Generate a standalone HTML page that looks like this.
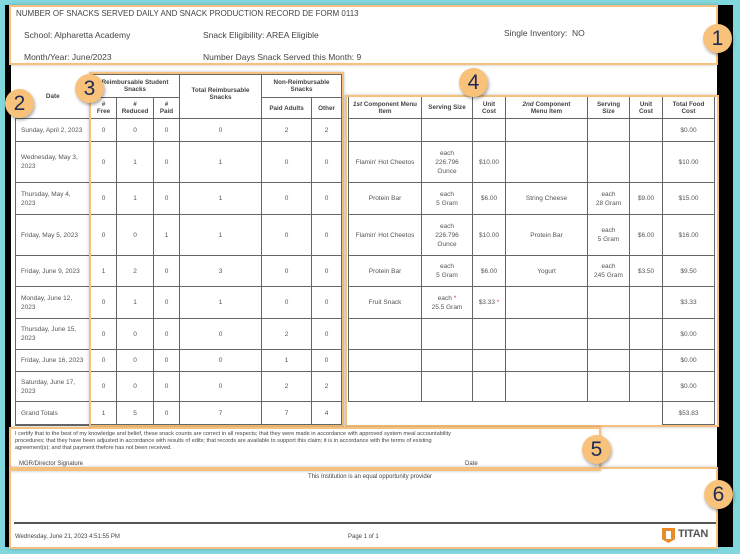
<!DOCTYPE html>
<html><head><style>
body{margin:0;width:740px;height:554px;background:#80d7dc;position:relative;overflow:hidden;font-family:"Liberation Sans",sans-serif;color:#444}
.page{position:absolute;left:5px;top:5px;width:728px;height:542px;background:#000}
.white{position:absolute;left:11px;top:5px;width:706px;height:542px;background:#fff}
.a{position:absolute}
.ob{position:absolute;border:2px solid #f6c07e;box-shadow:0 0 3px rgba(0,0,0,.25)}
.c{position:absolute;width:29px;height:29px;border-radius:50%;background:#f8c27a;color:#1d2a55;font-size:21px;text-align:center;line-height:30px;box-shadow:1px 2px 3px rgba(0,0,0,.35)}
table{position:absolute;border-collapse:collapse;table-layout:fixed;font-size:6.5px}
td{border:1px solid #666;text-align:center;padding:0;line-height:9px;color:#555}
th{border:1px solid #666;font-size:6.3px;font-weight:bold;padding:0 7px;line-height:7px;color:#444}
td.l{text-align:left;padding-left:5px}
.t{font-size:8.5px;color:#444}
</style></head><body>
<div class="page"></div><div class="white"></div>
<div class="a t" style="left:16px;top:9px;font-size:8px">NUMBER OF SNACKS SERVED DAILY AND SNACK PRODUCTION RECORD DE FORM 0113</div>
<div class="a t" style="left:24px;top:30px">School: Alpharetta Academy</div>
<div class="a t" style="left:203px;top:30px">Snack Eligibility: AREA Eligible</div>
<div class="a t" style="left:504px;top:28px">Single Inventory:&nbsp; NO</div>
<div class="a t" style="left:24px;top:52px">Month/Year: June/2023</div>
<div class="a t" style="left:203px;top:52px">Number Days Snack Served this Month: 9</div>

<table style="left:15px;top:74px;width:326px">
<colgroup><col style="width:75px"><col style="width:26px"><col style="width:37px"><col style="width:26px"><col style="width:82px"><col style="width:50px"><col style="width:30px"></colgroup>
<tr style="height:23px"><th rowspan="2" style="border-top:none;border-left:none">Date</th><th colspan="3">Reimbursable Student Snacks</th><th rowspan="2" style="vertical-align:top;padding-top:12px">Total Reimbursable Snacks</th><th colspan="2" style="padding:0 8px">Non-Reimbursable Snacks</th></tr>
<tr style="height:21px"><th style="padding:0">#<br>Free</th><th style="padding:0">#<br>Reduced</th><th style="padding:0">#<br>Paid</th><th style="padding:0">Paid Adults</th><th style="padding:0">Other</th></tr>
<tr style="height:23px"><td class="l">Sunday, April 2, 2023</td><td>0</td><td>0</td><td>0</td><td>0</td><td>2</td><td>2</td></tr>
<tr style="height:41px"><td class="l">Wednesday, May 3,<br>2023</td><td>0</td><td>1</td><td>0</td><td>1</td><td>0</td><td>0</td></tr>
<tr style="height:32px"><td class="l">Thursday, May 4,<br>2023</td><td>0</td><td>1</td><td>0</td><td>1</td><td>0</td><td>0</td></tr>
<tr style="height:41px"><td class="l">Friday, May 5, 2023</td><td>0</td><td>0</td><td>1</td><td>1</td><td>0</td><td>0</td></tr>
<tr style="height:31px"><td class="l">Friday, June 9, 2023</td><td>1</td><td>2</td><td>0</td><td>3</td><td>0</td><td>0</td></tr>
<tr style="height:32px"><td class="l">Monday, June 12,<br>2023</td><td>0</td><td>1</td><td>0</td><td>1</td><td>0</td><td>0</td></tr>
<tr style="height:31px"><td class="l">Thursday, June 15,<br>2023</td><td>0</td><td>0</td><td>0</td><td>0</td><td>2</td><td>0</td></tr>
<tr style="height:22px"><td class="l">Friday, June 16, 2023</td><td>0</td><td>0</td><td>0</td><td>0</td><td>1</td><td>0</td></tr>
<tr style="height:30px"><td class="l">Saturday, June 17,<br>2023</td><td>0</td><td>0</td><td>0</td><td>0</td><td>2</td><td>2</td></tr>
<tr style="height:23px"><td class="l">Grand Totals</td><td>1</td><td>5</td><td>0</td><td>7</td><td>7</td><td>4</td></tr>
</table>

<table style="left:348px;top:96px;width:366px">
<colgroup><col style="width:73px"><col style="width:51px"><col style="width:33px"><col style="width:82px"><col style="width:42px"><col style="width:33px"><col style="width:52px"></colgroup>
<tr style="height:22px"><th style="padding:0 3px"><i>1st</i> Component Menu Item</th><th style="padding:0">Serving Size</th><th style="padding:0 6px">Unit Cost</th><th style="padding:0 8px"><i>2nd</i> Component Menu Item</th><th style="padding:0 5px">Serving Size</th><th style="padding:0 6px">Unit Cost</th><th style="padding:0 8px">Total Food Cost</th></tr>
<tr style="height:23px"><td></td><td></td><td></td><td></td><td></td><td></td><td>$0.00</td></tr>
<tr style="height:41px"><td>Flamin' Hot Cheetos</td><td>each<br>226.796<br>Ounce</td><td>$10.00</td><td></td><td></td><td></td><td>$10.00</td></tr>
<tr style="height:32px"><td>Protein Bar</td><td>each<br>5 Gram</td><td>$6.00</td><td>String Cheese</td><td>each<br>28 Gram</td><td>$9.00</td><td>$15.00</td></tr>
<tr style="height:41px"><td>Flamin' Hot Cheetos</td><td>each<br>226.796<br>Ounce</td><td>$10.00</td><td>Protein Bar</td><td>each<br>5 Gram</td><td>$6.00</td><td>$16.00</td></tr>
<tr style="height:31px"><td>Protein Bar</td><td>each<br>5 Gram</td><td>$6.00</td><td>Yogurt</td><td>each<br>245 Gram</td><td>$3.50</td><td>$9.50</td></tr>
<tr style="height:32px"><td>Fruit Snack</td><td>each <span style="color:#d33">*</span><br>25.5 Gram</td><td>$3.33 <span style="color:#d33">*</span></td><td></td><td></td><td></td><td>$3.33</td></tr>
<tr style="height:31px"><td></td><td></td><td></td><td></td><td></td><td></td><td>$0.00</td></tr>
<tr style="height:22px"><td></td><td></td><td></td><td></td><td></td><td></td><td>$0.00</td></tr>
<tr style="height:30px"><td></td><td></td><td></td><td></td><td></td><td></td><td>$0.00</td></tr>
<tr style="height:23px"><td colspan="6" style="border-left:none;border-bottom:none"></td><td>$53.83</td></tr>
</table>

<div class="a" style="left:15px;top:424px;width:326px;border-top:2px solid #666"></div>
<div class="a" style="left:15px;top:431px;width:440px;font-size:5.6px;line-height:7px;color:#444">I certify that to the best of my knowledge and belief, these snack counts are correct in all respects; that they were made in accordance with approved system meal accountability procedures; that they have been adjusted in accordance with results of edits; that records are available to support this claim; it is in accordance with the terms of existing agreement(s); and that payment thefore has not been received.</div>
<div class="a" style="left:19px;top:461px;font-size:6px;color:#444">MGR/Director Signature</div>
<div class="a" style="left:465px;top:461px;font-size:6px;color:#444">Date</div>
<div class="a" style="left:0;top:474px;width:740px;text-align:center;font-size:6px;color:#444">This Institution is an equal opportunity provider</div>
<div class="a" style="left:14px;top:522px;width:702px;border-top:2px solid #555"></div>
<div class="a" style="left:15px;top:534px;font-size:6px;color:#444">Wednesday, June 21, 2023 4:51:55 PM</div>
<div class="a" style="left:348px;top:534px;font-size:6px;color:#444">Page 1 of 1</div>
<div class="a" style="left:662px;top:528px;width:13px;height:15px;background:#e98b2a;clip-path:polygon(0 0,100% 0,100% 75%,50% 100%,0 75%)"></div>
<div class="a" style="left:666px;top:531px;width:5px;height:8px;background:#fff"></div>
<div class="a" style="left:678px;top:528px;font-size:11px;font-weight:bold;color:#555;letter-spacing:-.3px">TITAN</div>

<div class="ob" style="left:9px;top:5px;width:705px;height:56px"></div>
<div class="ob" style="left:89px;top:72px;width:251px;height:351px"></div>
<div class="ob" style="left:345px;top:95px;width:370px;height:328px"></div>
<div class="ob" style="left:9px;top:427px;width:588px;height:40px"></div>
<div class="ob" style="left:9px;top:467px;width:705px;height:78px"></div>
<div class="c" style="left:703px;top:24px">1</div>
<div class="c" style="left:5px;top:89px">2</div>
<div class="c" style="left:75px;top:74px">3</div>
<div class="c" style="left:459px;top:68px">4</div>
<div class="c" style="left:582px;top:435px">5</div>
<div class="c" style="left:704px;top:480px">6</div>
</body></html>
